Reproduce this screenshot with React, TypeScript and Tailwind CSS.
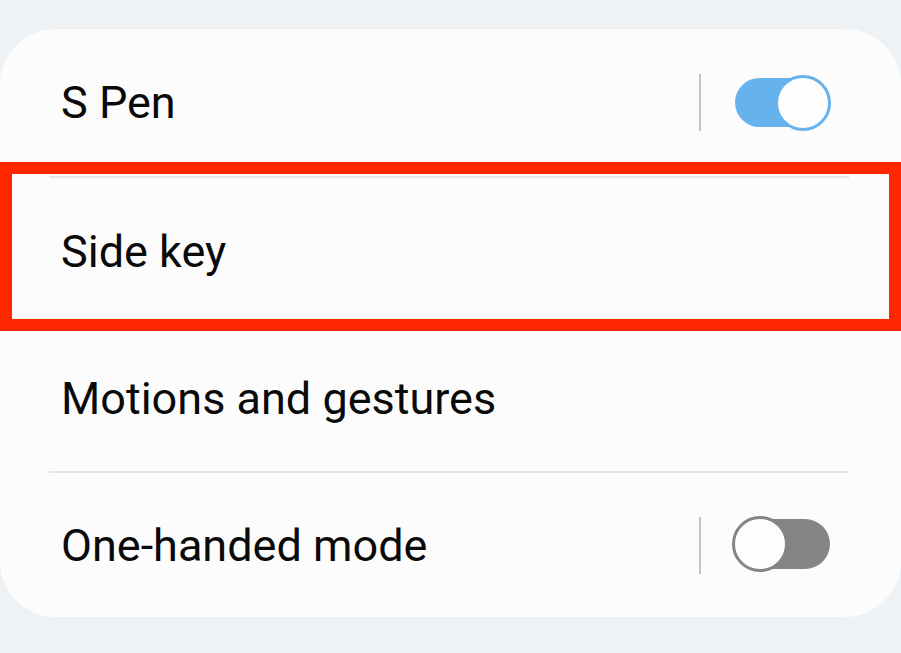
import React from 'react';

function Toggle({ on }: { on: boolean }) {
  return (
    <div className="flex items-center gap-[31px]">
      <div className="w-[2px] h-[57px] bg-[#c4c4c4]" />
      <div className="relative w-[99px] h-[58px]">
        {on ? (
          <>
            <div className="absolute left-[3px] top-[4px] w-[88px] h-[49px] rounded-full bg-[#66b2ec]" />
            <div className="absolute left-[43px] top-[1px] w-[56px] h-[56px] rounded-full bg-[#fdfdfd] border-[3px] border-[#66b2ec]" />
          </>
        ) : (
          <>
            <div className="absolute left-[10px] right-[1px] top-[3px] h-[50px] rounded-full bg-[#858585]" />
            <div className="absolute left-0 top-0 w-[56px] h-[56px] rounded-full bg-[#fdfdfd] border-[3px] border-[#858585]" />
          </>
        )}
      </div>
    </div>
  );
}

function Row({ label, height, toggle }: { label: string; height: string; toggle?: boolean }) {
  return (
    <div className={`flex items-center justify-between pl-[61px] pr-[70px] ${height}`}>
      <span className="text-[45px] leading-none text-[#0a0a0a]">{label}</span>
      {toggle !== undefined && <Toggle on={toggle} />}
    </div>
  );
}

export default function App() {
  return (
    <div
      className="relative h-[653px] w-full overflow-hidden bg-[#eef2f5] pt-[29px]"
      style={{ fontFamily: 'Roboto, "Noto Sans", sans-serif' }}
    >
      <div className="h-[588px] rounded-[56px] bg-[#fcfcfc] flex flex-col">
        <Row label="S Pen" height="h-[147px]" toggle={true} />
        <div className="ml-[49px] mr-[52px] h-[2px] bg-[#e6e6e6]" />
        <Row label="Side key" height="h-[147px]" />
        <Row label="Motions and gestures" height="h-[146px]" />
        <div className="ml-[49px] mr-[52px] h-[2px] bg-[#e6e6e6]" />
        <Row label="One-handed mode" height="h-[144px]" toggle={false} />
      </div>

      {/* red highlight annotation */}
      <div className="absolute left-0 right-0 top-[162px] h-[169px] border-[12px] border-[#ff2600] pointer-events-none" />
    </div>
  );
}
